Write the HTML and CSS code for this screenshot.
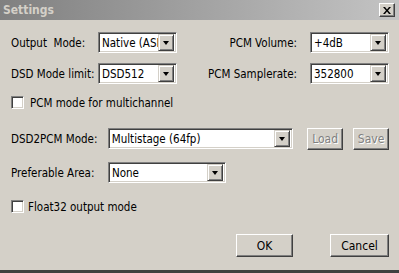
FILE: index.html
```html
<!DOCTYPE html>
<html lang="en">

<head>
    <meta charset="UTF-8">
    <title>Settings</title>
    <link rel="stylesheet" href="styles.css">
</head>

<body>
    <div class="window">
        <div class="titlebar">
            <span class="title">Settings</span>
            <button class="close">
                <svg width="8" height="7" viewBox="0 0 8 7"><path d="M0 0h2l2 2.5 2-2.5h2L5 3.5 8 7H6L4 4.5 2 7H0l3-3.5z" fill="#000"/></svg>
            </button>
        </div>
        <div class="content">
            <div class="grid-row first">
                <span class="label">Output&nbsp; Mode:</span>
                <div class="combo"><span class="value">Native (ASIO)</span><span class="arrow"></span></div>
                <span class="label right">PCM Volume:</span>
                <div class="combo"><span class="value">+4dB</span><span class="arrow"></span></div>
            </div>
            <div class="grid-row second">
                <span class="label">DSD Mode limit:</span>
                <div class="combo"><span class="value">DSD512</span><span class="arrow"></span></div>
                <span class="label right">PCM Samplerate:</span>
                <div class="combo"><span class="value">352800</span><span class="arrow"></span></div>
            </div>
            <div class="check-row multi">
                <span class="check"></span>
                <span class="label">PCM mode for multichannel</span>
            </div>
            <div class="row mode">
                <span class="label wide">DSD2PCM Mode:</span>
                <div class="combo long"><span class="value">Multistage (64fp)</span><span class="arrow"></span></div>
                <button class="btn small disabled">Load</button>
                <button class="btn small disabled">Save</button>
            </div>
            <div class="row area">
                <span class="label wide">Preferable Area:</span>
                <div class="combo mid"><span class="value">None</span><span class="arrow"></span></div>
            </div>
            <div class="check-row float">
                <span class="check"></span>
                <span class="label">Float32 output mode</span>
            </div>
            <div class="actions">
                <button class="btn ok">OK</button>
                <button class="btn cancel">Cancel</button>
            </div>
        </div>
    </div>
</body>

</html>
```
FILE: styles.css
```css
* {
    box-sizing: border-box;
}

body {
    margin: 0;
    background: #d4d0c8;
    font-family: Tahoma, "DejaVu Sans Condensed", "DejaVu Sans", sans-serif;
    font-size: 11.5px;
    color: #000;
}

.window {
    width: 399px;
    height: 273px;
    background: #d4d0c8;
    border-bottom: 3px solid #404040;
}

.titlebar {
    height: 20px;
    display: flex;
    align-items: center;
    justify-content: space-between;
    padding: 0 4px 0 3px;
    background: linear-gradient(to right, #808080, #c4c4c4);
}

.title {
    color: #d4d0c8;
    font-weight: bold;
    font-size: 12px;
}

.close {
    width: 16px;
    height: 14px;
    padding: 0;
    display: flex;
    align-items: center;
    justify-content: center;
    background: #d4d0c8;
    border: 1px solid;
    border-color: #fff #404040 #404040 #fff;
    box-shadow: inset -1px -1px 0 #808080;
}

.content {
    padding: 0 10px 0 11px;
}

.grid-row {
    display: grid;
    grid-template-columns: 87px 79px 1fr 79px;
    align-items: center;
    height: 21px;
}

.grid-row.first {
    margin-top: 12px;
}

.grid-row.second {
    margin-top: 10px;
}

.label {
    white-space: nowrap;
}

.label.right {
    text-align: right;
    padding-right: 13px;
}

.combo {
    height: 21px;
    display: flex;
    align-items: center;
    background: #fff;
    border: 1px solid;
    border-color: #808080 #fff #fff #808080;
    box-shadow: inset 1px 1px 0 #404040, inset -1px -1px 0 #d4d0c8;
    padding: 2px;
    overflow: hidden;
    font-size: 11.5px;
}

.combo .value {
    flex: 1;
    white-space: nowrap;
    overflow: hidden;
    padding-left: 1px;
}

.combo .arrow {
    width: 16px;
    height: 17px;
    flex: none;
    position: relative;
    background: #d4d0c8;
    border: 1px solid;
    border-color: #d4d0c8 #404040 #404040 #d4d0c8;
    box-shadow: inset 1px 1px 0 #fff, inset -1px -1px 0 #808080;
}

.combo .arrow::after {
    content: "";
    position: absolute;
    left: 4px;
    top: 6px;
    border-left: 3.5px solid transparent;
    border-right: 3.5px solid transparent;
    border-top: 4px solid #000;
}

.check-row {
    display: flex;
    align-items: center;
    gap: 6px;
    height: 21px;
}

.check-row.multi {
    margin-top: 8px;
}

.check-row.float {
    margin-top: 13px;
    gap: 4px;
}

.check {
    width: 13px;
    height: 13px;
    background: #fff;
    border: 1px solid;
    border-color: #808080 #fff #fff #808080;
    box-shadow: inset 1px 1px 0 #404040, inset -1px -1px 0 #d4d0c8;
}

.row {
    display: flex;
    align-items: center;
    height: 21px;
}

.row.mode {
    margin-top: 15px;
}

.row.area {
    margin-top: 13px;
}

.label.wide {
    width: 97px;
}

.combo.long {
    width: 186px;
}

.combo.mid {
    width: 118px;
}

.btn {
    font-family: inherit;
    font-size: 12px;
    background: #d4d0c8;
    color: #000;
    border: 1px solid;
    border-color: #fff #404040 #404040 #fff;
    box-shadow: inset -1px -1px 0 #808080;
    padding: 0;
}

.btn.small {
    width: 36px;
    height: 22px;
    margin-left: 14px;
}

.btn.small + .btn.small {
    margin-left: 10px;
}

.btn.disabled {
    color: #808080;
    text-shadow: 1px 1px 0 #fff;
}

.actions {
    display: flex;
    justify-content: flex-end;
    gap: 37px;
    margin-top: 17px;
}

.btn.ok {
    width: 57px;
    height: 23px;
}

.btn.cancel {
    width: 59px;
    height: 23px;
}
```
